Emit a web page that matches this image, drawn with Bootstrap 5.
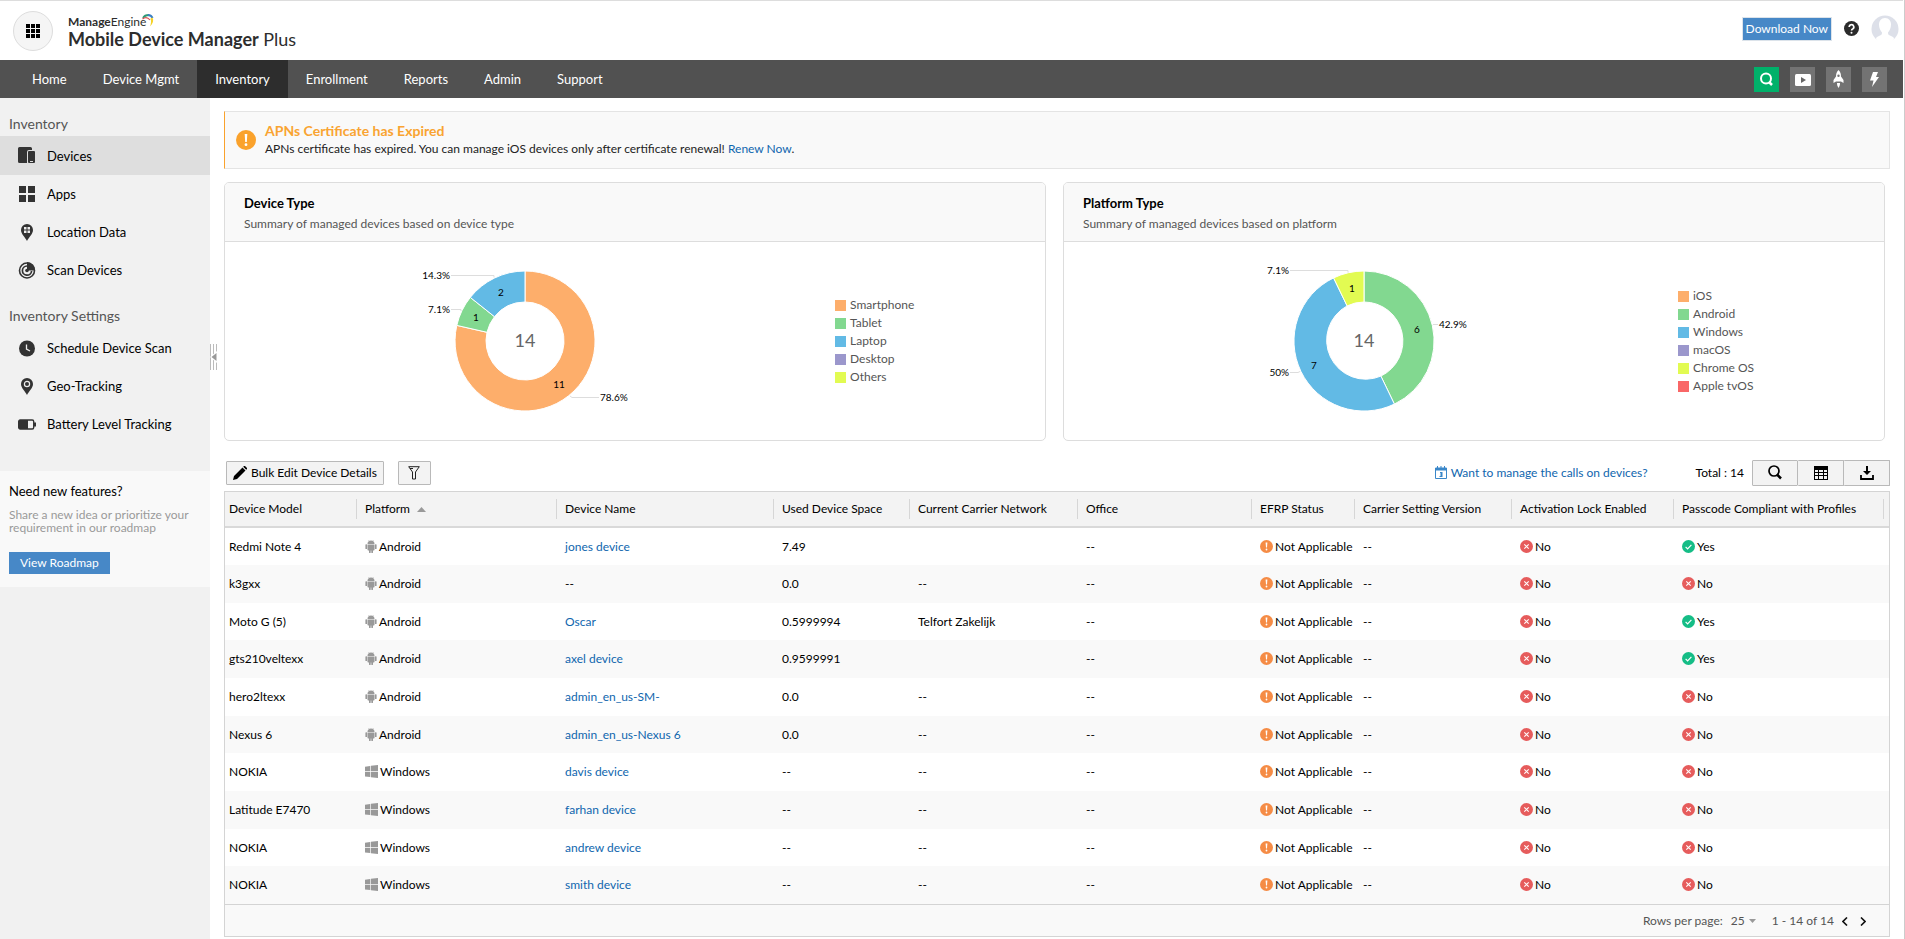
<!DOCTYPE html>
<html lang="en">
<head>
<meta charset="utf-8">
<meta name="viewport" content="width=device-width, initial-scale=1">
<title>Mobile Device Manager Plus - Inventory</title>
<link href="https://cdn.jsdelivr.net/npm/bootstrap@5.3.0/dist/css/bootstrap.min.css" rel="stylesheet">
<style>
  body { font-family: Lato, "Liberation Sans", sans-serif; font-size: 12px; line-height: 16px; color: #000; }
  a { color: #0f66ae; text-decoration: none; }
  .page { min-height: 100vh; padding-right: 1px; border-right: 1px solid #ccc; }
  .masthead { height: 60px; border-top: 1px solid #ddd; padding: 0 4px 0 13px; }
  .launcher { width: 40px; height: 40px; border: 1px solid #ddd; border-radius: 50%; background: #f5f5f5; }
  .brand { margin-left: 15px; color: #2d2d2d; }
  .brand-top { font-size: 12px; line-height: 16px; }
  .brand-top svg { margin-left: -5px; }
  .brand-name { font-size: 18px; line-height: 18px; }
  .brand-name b, .brand-top b { font-weight: 700; }
  .btn-blue { background: #4788c7; color: #fff; border-radius: 0; font-size: 12px; line-height: 16px; padding: 3px 11px; border: 0; }
  .btn-blue:hover { background: #3a79b6; color: #fff; }
  .btn-download { padding: 3px; border: 1px solid #dce3ea; }
  .mainnav { height: 38px; background: #515151; padding: 0 16px 0 14px; }
  .mainnav .nav-link { color: #fff; font-size: 13px; line-height: 38px; padding: 0 18px; }
  .mainnav .nav-link.active { background: #2d2d2d; }
  .tools { gap: 11px; }
  .tool { width: 25px; height: 25px; background: #737373; border: 0; padding: 0; }
  .tool-search { background: #00b16a; }
  .sidebar { width: 210px; flex: none; background: #f1f1f1; position: relative; padding-top: 14px; }
  .side-head { font-size: 14px; line-height: 24px; color: #555; padding-left: 9px; margin: 0; font-weight: 400; }
  .sidebar .nav-link { display: flex; align-items: center; gap: 11px; height: 38px; padding: 0 17px 0 18px; font-size: 13px; color: #000; }
  .sidebar .nav-link.active { background: #dedede; height: 39px; }
  .sidebar .nav-link svg { flex: none; }
  .side-second { margin-top: 15px; }
  .side-second .side-head { margin-bottom: 1px; }
  .promo { background: #f9f9f9; margin-top: 28px; padding: 11px 9px 13px; }
  .promo h3 { font-size: 13px; line-height: 18px; margin: 0 0 8px; font-weight: 400; }
  .promo p { line-height: 13px; color: #999; margin: 0 0 18px; }
  .splitter { position: absolute; left: 210px; top: 246px; width: 8px; height: 26px; padding: 0; border: 0; background: none; }
  .splitter svg { display: block; }
  .content { flex: 1 1 0; min-width: 0; padding: 13px 13px 3px 14px; }
  .notice { background: #f9f9f9; border: 1px solid #e4e4e4; border-left-color: #faa22c; padding: 10px 11px; height: 58px; gap: 9px; }
  .notice h2 { font-size: 14px; line-height: 18px; font-weight: 700; color: #f9a431; margin: 0; }
  .notice p { margin: 0; line-height: 18px; color: #222; }
  .panels { gap: 17px; margin-top: 13px; padding-right: 5px; }
  .panel { flex: 1 1 0; min-width: 0; border: 1px solid #ddd; border-radius: 5px; overflow: hidden; }
  .panel-head { background: #f9f9f9; border-bottom: 1px solid #ddd; height: 59px; padding: 10px 19px; }
  .panel-head h2 { font-size: 13px; line-height: 20px; font-weight: 700; margin: 0; }
  .panel-head p { color: #555; margin: 3px 0 0; }
  .panel-body { height: 198px; }
  .chart { flex: 0 0 74.4%; padding-right: 10px; }
  .chart text { font-size: 10px; }
  .chart .sum { font-size: 18px; fill: #666; }
  .keys li { display: flex; align-items: center; gap: 4px; line-height: 18px; color: #555; }
  .keys i { width: 11px; height: 11px; }
  .toolbar { margin-top: 19px; padding-left: 2px; height: 25px; gap: 14px; }
  .btn-grey { background: #f3f3f3; border: 1px solid #b9b9b9; border-radius: 1px; padding: 0 6px; height: 24px; font-size: 12px; line-height: 16px; color: #000; display: inline-flex; align-items: center; justify-content: center; }
  .btn-grey:hover { background: #e8e8e8; border-color: #aaa; }
  .btn-filter { width: 33px; padding: 0; }
  .tabletools .btn-grey { width: 46px; height: 26px; padding: 0; }
  .grid-box { margin-top: 6px; border: 1px solid #d4d4d4; }
  .devices { width: 100%; table-layout: fixed; }
  .devices th { font-weight: 400; height: 35px; background: #f3f3f3; border-bottom: 2px solid #d9d9d9; padding: 0; white-space: nowrap; }
  .devices th span { display: block; line-height: 20px; border-left: 1px solid #d6d6d6; padding-left: 8px; }
  .devices th:first-child span { border-left: 0; padding-left: 4px; }
  .devices th:last-child span { min-height: 20px; }
  .devices td { height: 38px; padding: 0 0 0 9px; white-space: nowrap; }
  .devices td:first-child { padding-left: 4px; }
  .devices tbody tr:nth-child(even) td { background: #f9f9f9; }
  .devices tbody tr:nth-child(3n) td { height: 37px; }
  .devices td svg { vertical-align: -2px; margin-right: 2px; }
  .w-model { width: 131px; } .w-platform { width: 200px; } .w-name { width: 217px; } .w-space { width: 136px; }
  .w-carrier { width: 168px; } .w-office { width: 174px; } .w-efrp { width: 103px; } .w-setting { width: 157px; }
  .w-lock { width: 162px; } .w-pass { width: 210px; } .w-end { width: 6px; }
  .pager { background: #f9f9f9; border-top: 1px solid #d4d4d4; height: 32px; color: #555; padding-right: 23px; }
  .pager select { appearance: none; border: 0; background: none; color: #555; padding: 0; width: 18px; }
  .pager button { border: 0; background: none; padding: 0; line-height: 1; }
</style>
</head>
<body>
<svg width="0" height="0" class="position-absolute" aria-hidden="true">
  <symbol id="android" viewBox="0 0 12 13"><g fill="#999"><path d="M2.500 4a3.500 3.600 0 0 1 7 0zM2.500 4.400h7v5.300a.8.800 0 0 1-.8.800H8v1.800a.8.800 0 0 1-1.700 0v-1.800h-.6v1.800a.8.800 0 0 1-1.700 0v-1.800h-.7a.8.800 0 0 1-.8-.8z"/><rect x=".4" y="4.300" width="1.700" height="4.800" rx=".7"/><rect x="9.900" y="4.300" width="1.700" height="4.800" rx=".7"/></g><path d="M3.500.2l.9 1.200M8.500.2l-.9 1.200" stroke="#999" stroke-width=".5"/></symbol>
  <symbol id="windows" viewBox="0 0 13 13"><path fill="#999" d="M0 1.700l5.200-.8v5.300H0zM5.900.8L13 0v6.200H5.900zM0 6.900h5.200v5.200L0 11.400zM5.900 6.900H13V13l-7.100-.8z"/></symbol>
  <symbol id="warn" viewBox="0 0 13 13"><circle cx="6.500" cy="6.500" r="6.500" fill="#f58c46"/><path d="M5.600 2.500h1.800l-.4 5H6z" fill="#fff"/><circle cx="6.500" cy="9.500" r=".9" fill="#fff"/></symbol>
  <symbol id="no" viewBox="0 0 13 13"><circle cx="6.500" cy="6.500" r="6.500" fill="#e65c5c"/><path d="M4.300 4.300l4.400 4.400M8.700 4.300L4.300 8.700" stroke="#fff" stroke-width="1.100"/></symbol>
  <symbol id="yes" viewBox="0 0 13 13"><circle cx="6.500" cy="6.500" r="6.500" fill="#15bd86"/><path d="M3.600 6.800l2 2 3.800-4" fill="none" stroke="#fff" stroke-width="1.200"/></symbol>
</svg>
<div class="page d-flex flex-column">
  <header class="masthead d-flex align-items-center">
    <button class="launcher d-flex align-items-center justify-content-center p-0" aria-label="Applications">
      <svg width="14" height="14" viewBox="0 0 14 14"><path d="M0 0h4v4H0zM5 0h4v4H5zM10 0h4v4h-4zM0 5h4v4H0zM5 5h4v4H5zM10 5h4v4h-4zM0 10h4v4H0zM5 10h4v4H5zM10 10h4v4h-4z"/></svg>
    </button>
    <div class="brand">
      <div class="brand-top d-flex"><span><b>Manage</b>Engine</span>
        <svg width="14" height="16" viewBox="0 0 14 16" fill="none"><path d="M2 4C3 2 5 1 8 1" stroke="#2c9a76" stroke-width="1.800"/><path d="M7 1c3 .2 4 1.500 4.500 3" stroke="#3b7fc4" stroke-width="2"/><path d="M11.500 3.500c1.500 3 .5 6-2.500 9 1-3 1.500-5 .5-8z" fill="#f5d327"/><path d="M1.500 5C4 3 7 3.500 9 6" stroke="#d94f4f" stroke-width="1.200"/></svg></div>
      <div class="brand-name"><b>Mobile Device Manager</b> Plus</div>
    </div>
    <div class="ms-auto mb-1 d-flex align-items-center">
      <button class="btn btn-blue btn-download">Download Now</button>
      <a href="#" class="d-flex ms-2 ps-1" aria-label="Help"><svg width="15" height="15" viewBox="0 0 15 15"><circle cx="7.500" cy="7.500" r="7.500" fill="#2b2b2b"/><path d="M5.200 6a2.300 2.300 0 1 1 3.400 2c-.8.400-1 .8-1 1.500" fill="none" stroke="#fff" stroke-width="1.700"/><circle cx="7.500" cy="11.700" r="1" fill="#fff"/></svg></a>
      <a href="#" class="d-flex ms-2 ps-1" aria-label="Profile"><svg width="28" height="28" viewBox="0 0 28 28"><circle cx="14" cy="14" r="13.500" fill="#dde0e9"/><path d="M14 3c4 0 6 3 6 6.500S18.500 16 17 17.500c0 2 .5 2.500 3 3.500 1.500.6 2.500 1 3 2.500 C22 27 18 28 14 28s-8-1-9-4.500c.5-1.500 1.500-2 3-2.500 2.500-1 3-1.500 3-3.500C9.500 16 8 13 8 9.500S10 3 14 3z" fill="#fff"/></svg></a>
    </div>
  </header>
  <nav class="mainnav d-flex align-items-center">
    <div class="nav flex-nowrap">
      <a class="nav-link" href="#">Home</a>
      <a class="nav-link" href="#">Device Mgmt</a>
      <a class="nav-link active" href="#">Inventory</a>
      <a class="nav-link" href="#">Enrollment</a>
      <a class="nav-link" href="#">Reports</a>
      <a class="nav-link" href="#">Admin</a>
      <a class="nav-link" href="#">Support</a>
    </div>
    <div class="tools ms-auto d-flex">
      <button class="tool tool-search" aria-label="Search"><svg width="15" height="15" viewBox="0 0 15 15" fill="none" stroke="#fff"><circle cx="7" cy="6.500" r="5" stroke-width="2"/><path d="M10 10l3 3" stroke-width="2.500"/></svg></button>
      <button class="tool" aria-label="Videos"><svg width="16" height="12" viewBox="0 0 16 12"><rect width="16" height="12" rx="1.500" fill="#fff"/><path d="M6 3l5 3-5 3z" fill="#666"/></svg></button>
      <button class="tool" aria-label="Quick launch"><svg width="11" height="18" viewBox="0 0 11 18" fill="#fff"><path fill-rule="evenodd" d="M5.500 0C7.500 2 8 4 8 6.500L10.500 10v3L8 11.500H3L.5 13v-3L3 6.500C3 4 3.500 2 5.500 0zm0 4.500a1.200 1.200 0 1 0 0 2.400 1.200 1.200 0 0 0 0-2.400z"/><path d="M4 13h3c0 2-.5 3.500-1.500 5C4.500 16.500 4 15 4 13z"/></svg></button>
      <button class="tool" aria-label="Activity"><svg width="9" height="15" viewBox="0 0 9 15"><path d="M3 0h5L6 5h3L2 15l1.500-6.500H0z" fill="#fff"/></svg></button>
    </div>
  </nav>
  <div class="d-flex flex-grow-1">
    <aside class="sidebar">
      <h2 class="side-head">Inventory</h2>
      <nav class="nav flex-column">
        <a class="nav-link active" href="#"><svg width="18" height="17" viewBox="0 0 18 17" fill="#333"><path d="M1.500 0h11A1.500 1.500 0 0 1 14 1.500V3h-3a2 2 0 0 0-2 2v11H1.500A1.500 1.500 0 0 1 0 14.500v-13A1.500 1.500 0 0 1 1.500 0z"/><rect x="10" y="4" width="7" height="12" rx="1"/><path d="M12 14.500h3" stroke="#ddd"/></svg>Devices</a>
        <a class="nav-link" href="#"><svg width="18" height="16" viewBox="0 0 18 16" fill="#333"><path d="M1 0h7v7H1zM10 0h7v7h-7zM1 9h7v7H1zM10 9h7v7h-7z"/></svg>Apps</a>
        <a class="nav-link" href="#"><svg width="18" height="17" viewBox="0 0 18 17"><path d="M9 0a6 6 0 0 1 6 6c0 4-4 7-6 11-2-4-6-7-6-11a6 6 0 0 1 6-6z" fill="#333"/><path d="M6 3h2.500v2.500H6zM9.500 3H12v2.500H9.500zM6 6.500h2.500V9H6zM9.500 6.500H12V9H9.500z" fill="#eee"/></svg>Location Data</a>
        <a class="nav-link" href="#"><svg width="18" height="17" viewBox="0 0 18 17" fill="none" stroke="#333"><circle cx="9" cy="8.500" r="7.500" stroke-width="1.600"/><path d="M9 4a4.600 4.600 0 1 0 4.600 5" stroke-width="1.700"/><path d="M9 0v8.500h8A8 8 0 0 0 9 0z" fill="#333" stroke="none"/><circle cx="9" cy="8.500" r="1.800" fill="#333" stroke="none"/></svg>Scan Devices</a>
      </nav>
      <div class="side-second">
        <h2 class="side-head">Inventory Settings</h2>
        <nav class="nav flex-column">
          <a class="nav-link" href="#"><svg width="18" height="17" viewBox="0 0 18 17"><circle cx="9" cy="8.500" r="8" fill="#333"/><path d="M8.500 4.500V9l3.500 2" fill="none" stroke="#eee" stroke-width="1.300"/></svg>Schedule Device Scan</a>
          <a class="nav-link" href="#"><svg width="18" height="17" viewBox="0 0 18 17"><path d="M9 0a6 6 0 0 1 6 6c0 4-4 7-6 11-2-4-6-7-6-11a6 6 0 0 1 6-6z" fill="#333"/><circle cx="9" cy="6" r="2.600" fill="none" stroke="#eee" stroke-width="1.200"/></svg>Geo-Tracking</a>
          <a class="nav-link" href="#"><svg width="18" height="11" viewBox="0 0 18 11"><rect x=".7" y="1" width="15" height="9" rx="1.500" fill="#f1f1f1" stroke="#333" stroke-width="1.400"/><path d="M1 1h9v9H1zM16 3.500h2v4h-2z" fill="#333"/></svg>Battery Level Tracking</a>
        </nav>
      </div>
      <section class="promo">
        <h3>Need new features?</h3>
        <p>Share a new idea or prioritize your requirement in our roadmap</p>
        <button class="btn btn-blue">View Roadmap</button>
      </section>
      <button class="splitter" aria-label="Collapse sidebar"><svg width="8" height="26" viewBox="0 0 8 26"><path d="M.5 0v26M3.500 0v26M6.500 0v26" stroke="#bbb"/><path d="M7 7v12L0 13z" fill="#fff"/><path d="M6.500 9v8L1.500 13z" fill="#999"/></svg></button>
    </aside>
    <main class="content">
      <section class="notice d-flex align-items-center">
        <svg width="20" height="20" viewBox="0 0 20 20" class="flex-shrink-0"><circle cx="10" cy="10" r="10" fill="#faa22c"/><path d="M8.700 4h2.600l-.5 8H9.200z" fill="#fff"/><circle cx="10" cy="14.700" r="1.400" fill="#fff"/></svg>
        <div>
          <h2>APNs Certificate has Expired</h2>
          <p>APNs certificate has expired. You can manage iOS devices only after certificate renewal! <a href="#">Renew Now</a>.</p>
        </div>
      </section>
      <div class="panels d-flex">
        <section class="panel">
          <div class="panel-head"><h2>Device Type</h2><p>Summary of managed devices based on device type</p></div>
          <div class="panel-body d-flex align-items-center">
            <div class="chart d-flex justify-content-center">
              <svg width="220" height="160" viewBox="-110 -80 220 160" role="img" aria-label="Devices by type">
                <g stroke="#fff"><path fill="#fdae6b" d="M0-70A70 70 0 1 1-68.200-15.600L-38-8.700A39 39 0 1 0 0-39z"/><path fill="#82d890" d="M-68.200-15.600A70 70 0 0 1-54.700-43.600L-30.500-24.300A39 39 0 0 0-38-8.700z"/><path fill="#62bae5" d="M-54.700-43.600A70 70 0 0 1 0-70V-39A39 39 0 0 0-30.500-24.300z"/></g>
                <path d="M-74-65.500h43v2M-74-31.500h10v1.500M45 55l2 1.500h27" fill="none" stroke="#ddd"/>
                <g text-anchor="end"><text x="-75" y="-62">14.3%</text><text x="-75" y="-28">7.1%</text></g><text x="75" y="60">78.6%</text>
                <g text-anchor="middle"><text x="-24" y="-45">2</text><text x="-49" y="-20">1</text><text x="34" y="47">11</text><text class="sum" x="0" y="6">14</text></g>
              </svg>
            </div>
            <ul class="keys list-unstyled mb-0">
              <li><i style="background:#fdae6b"></i>Smartphone</li><li><i style="background:#82d890"></i>Tablet</li><li><i style="background:#62bae5"></i>Laptop</li><li><i style="background:#9b97cc"></i>Desktop</li><li><i style="background:#e2fb52"></i>Others</li>
            </ul>
          </div>
        </section>
        <section class="panel">
          <div class="panel-head"><h2>Platform Type</h2><p>Summary of managed devices based on platform</p></div>
          <div class="panel-body d-flex align-items-center">
            <div class="chart d-flex justify-content-center">
              <svg width="220" height="160" viewBox="-110 -80 220 160" role="img" aria-label="Devices by platform">
                <g stroke="#fff"><path fill="#82d890" d="M0-70A70 70 0 0 1 30.400 63.100L16.900 35.100A39 39 0 0 0 0-39z"/><path fill="#62bae5" d="M30.400 63.100A70 70 0 0 1-30.400-63.100L-16.900-35.100A39 39 0 0 0 16.900 35.100z"/><path fill="#e2fb52" d="M-30.400-63.100A70 70 0 0 1 0-70V-39A39 39 0 0 0-16.900-35.100z"/></g>
                <path d="M-74-70.500h58v2M69-16.500h5M-74 31.500h8l2-1" fill="none" stroke="#ddd"/>
                <g text-anchor="end"><text x="-75" y="-67">7.1%</text><text x="-75" y="35">50%</text></g><text x="75" y="-13">42.9%</text>
                <g text-anchor="middle"><text x="-12" y="-49">1</text><text x="53" y="-8">6</text><text x="-50" y="28">7</text><text class="sum" x="0" y="6">14</text></g>
              </svg>
            </div>
            <ul class="keys list-unstyled mb-0 ps-1">
              <li><i style="background:#fdae6b"></i>iOS</li><li><i style="background:#82d890"></i>Android</li><li><i style="background:#62bae5"></i>Windows</li><li><i style="background:#9b97cc"></i>macOS</li><li><i style="background:#e2fb52"></i>Chrome OS</li><li><i style="background:#f96767"></i>Apple tvOS</li>
            </ul>
          </div>
        </section>
      </div>
      <div class="toolbar d-flex align-items-center">
        <button class="btn-grey gap-1"><svg width="14" height="14" viewBox="0 0 14 14"><path d="M0 14l1-4L9.500 1.500l3 3L4 13zM10.200.8l.8-.8h1l2 2v1l-.8.800z"/></svg>Bulk Edit Device Details</button>
        <button class="btn-grey btn-filter" aria-label="Filter"><svg width="12" height="14" viewBox="0 0 12 14"><path d="M.7.700h10.600L7.500 6v7h-3V6zM2 2.500l3 0" fill="none" stroke="#222"/></svg></button>
        <div class="ms-auto d-flex align-items-center">
          <a href="#" class="d-flex align-items-center"><svg width="12" height="13" viewBox="0 0 12 13" class="me-1"><path d="M.5 2h11v10.500H.5z" fill="none" stroke="#3a87c9"/><path d="M0 2h12v2.500H0zM2 0h1v2H2zM5.500 0h1v2h-1zM9 0h1v2H9zM5 6h2.500v5H4.500v-1h1V7H5z" fill="#3a87c9"/></svg>Want to manage the calls on devices?</a>
          <span class="ms-5 me-2">Total : 14</span>
          <div class="btn-group tabletools">
            <button class="btn-grey" aria-label="Search"><svg width="14" height="15" viewBox="0 0 14 15" fill="none" stroke="#000"><circle cx="6" cy="6" r="5" stroke-width="1.700"/><path d="M9 9.500l4 4" stroke-width="2.500"/></svg></button>
            <button class="btn-grey border-start-0" aria-label="Columns"><svg width="14" height="14" viewBox="0 0 14 14"><path fill-rule="evenodd" d="M0 0h14v14H0zM1 4v2h3V4zM5 4v2h4V4zM10 4v2h3V4zM1 7v2h3V7zM5 7v2h4V7zM10 7v2h3V7zM1 10v3h3v-3zM5 10v3h4v-3zM10 10v3h3v-3z"/></svg></button>
            <button class="btn-grey border-start-0" aria-label="Export"><svg width="14" height="14" viewBox="0 0 14 14"><path d="M6 0h2v5h3L7 9 3 5h3z"/><path d="M1 9v4h12V9" fill="none" stroke="#000" stroke-width="1.800"/></svg></button>
          </div>
        </div>
      </div>
      <div class="grid-box">
        <table class="devices">
          <colgroup><col class="w-model"><col class="w-platform"><col class="w-name"><col class="w-space"><col class="w-carrier"><col class="w-office"><col class="w-efrp"><col class="w-setting"><col class="w-lock"><col class="w-pass"><col class="w-end"></colgroup>
          <thead><tr><th><span>Device Model</span></th><th><span>Platform <svg width="9" height="5" viewBox="0 0 9 5" class="ms-1"><path d="M4.500 0L9 5H0z" fill="#999"/></svg></span></th><th><span>Device Name</span></th><th><span>Used Device Space</span></th><th><span>Current Carrier Network</span></th><th><span>Office</span></th><th><span>EFRP Status</span></th><th><span>Carrier Setting Version</span></th><th><span>Activation Lock Enabled</span></th><th><span>Passcode Compliant with Profiles</span></th><th><span></span></th></tr></thead>
          <tbody>
            <tr><td>Redmi Note 4</td><td><svg width="12" height="13"><use href="#android"/></svg>Android</td><td><a href="#">jones device</a></td><td>7.49</td><td></td><td>--</td><td><svg width="13" height="13"><use href="#warn"/></svg>Not Applicable</td><td>--</td><td><svg width="13" height="13"><use href="#no"/></svg>No</td><td><svg width="13" height="13"><use href="#yes"/></svg>Yes</td><td></td></tr>
            <tr><td>k3gxx</td><td><svg width="12" height="13"><use href="#android"/></svg>Android</td><td>--</td><td>0.0</td><td>--</td><td>--</td><td><svg width="13" height="13"><use href="#warn"/></svg>Not Applicable</td><td>--</td><td><svg width="13" height="13"><use href="#no"/></svg>No</td><td><svg width="13" height="13"><use href="#no"/></svg>No</td><td></td></tr>
            <tr><td>Moto G (5)</td><td><svg width="12" height="13"><use href="#android"/></svg>Android</td><td><a href="#">Oscar</a></td><td>0.5999994</td><td>Telfort Zakelijk</td><td>--</td><td><svg width="13" height="13"><use href="#warn"/></svg>Not Applicable</td><td>--</td><td><svg width="13" height="13"><use href="#no"/></svg>No</td><td><svg width="13" height="13"><use href="#yes"/></svg>Yes</td><td></td></tr>
            <tr><td>gts210veltexx</td><td><svg width="12" height="13"><use href="#android"/></svg>Android</td><td><a href="#">axel device</a></td><td>0.9599991</td><td></td><td>--</td><td><svg width="13" height="13"><use href="#warn"/></svg>Not Applicable</td><td>--</td><td><svg width="13" height="13"><use href="#no"/></svg>No</td><td><svg width="13" height="13"><use href="#yes"/></svg>Yes</td><td></td></tr>
            <tr><td>hero2ltexx</td><td><svg width="12" height="13"><use href="#android"/></svg>Android</td><td><a href="#">admin_en_us-SM-</a></td><td>0.0</td><td>--</td><td>--</td><td><svg width="13" height="13"><use href="#warn"/></svg>Not Applicable</td><td>--</td><td><svg width="13" height="13"><use href="#no"/></svg>No</td><td><svg width="13" height="13"><use href="#no"/></svg>No</td><td></td></tr>
            <tr><td>Nexus 6</td><td><svg width="12" height="13"><use href="#android"/></svg>Android</td><td><a href="#">admin_en_us-Nexus 6</a></td><td>0.0</td><td>--</td><td>--</td><td><svg width="13" height="13"><use href="#warn"/></svg>Not Applicable</td><td>--</td><td><svg width="13" height="13"><use href="#no"/></svg>No</td><td><svg width="13" height="13"><use href="#no"/></svg>No</td><td></td></tr>
            <tr><td>NOKIA</td><td><svg width="13" height="13"><use href="#windows"/></svg>Windows</td><td><a href="#">davis device</a></td><td>--</td><td>--</td><td>--</td><td><svg width="13" height="13"><use href="#warn"/></svg>Not Applicable</td><td>--</td><td><svg width="13" height="13"><use href="#no"/></svg>No</td><td><svg width="13" height="13"><use href="#no"/></svg>No</td><td></td></tr>
            <tr><td>Latitude E7470</td><td><svg width="13" height="13"><use href="#windows"/></svg>Windows</td><td><a href="#">farhan device</a></td><td>--</td><td>--</td><td>--</td><td><svg width="13" height="13"><use href="#warn"/></svg>Not Applicable</td><td>--</td><td><svg width="13" height="13"><use href="#no"/></svg>No</td><td><svg width="13" height="13"><use href="#no"/></svg>No</td><td></td></tr>
            <tr><td>NOKIA</td><td><svg width="13" height="13"><use href="#windows"/></svg>Windows</td><td><a href="#">andrew device</a></td><td>--</td><td>--</td><td>--</td><td><svg width="13" height="13"><use href="#warn"/></svg>Not Applicable</td><td>--</td><td><svg width="13" height="13"><use href="#no"/></svg>No</td><td><svg width="13" height="13"><use href="#no"/></svg>No</td><td></td></tr>
            <tr><td>NOKIA</td><td><svg width="13" height="13"><use href="#windows"/></svg>Windows</td><td><a href="#">smith device</a></td><td>--</td><td>--</td><td>--</td><td><svg width="13" height="13"><use href="#warn"/></svg>Not Applicable</td><td>--</td><td><svg width="13" height="13"><use href="#no"/></svg>No</td><td><svg width="13" height="13"><use href="#no"/></svg>No</td><td></td></tr>
          </tbody>
        </table>
        <div class="pager d-flex align-items-center justify-content-end">
          <label for="rows" class="me-2">Rows per page:</label>
          <select id="rows"><option>25</option></select>
          <svg width="7" height="4" viewBox="0 0 7 4" class="me-3"><path d="M0 0h7L3.500 4z" fill="#999"/></svg>
          <span class="me-2">1 - 14 of 14</span>
          <button aria-label="Previous page" class="me-2 pe-1"><svg width="6" height="9" viewBox="0 0 6 9"><path d="M5 .5l-4 4 4 4" fill="none" stroke="#111" stroke-width="1.600"/></svg></button>
          <button aria-label="Next page"><svg width="6" height="9" viewBox="0 0 6 9"><path d="M1 .5l4 4-4 4" fill="none" stroke="#111" stroke-width="1.600"/></svg></button>
        </div>
      </div>
    </main>
  </div>
</div>
<script src="https://cdn.jsdelivr.net/npm/bootstrap@5.3.0/dist/js/bootstrap.bundle.min.js"></script>
</body>
</html>
